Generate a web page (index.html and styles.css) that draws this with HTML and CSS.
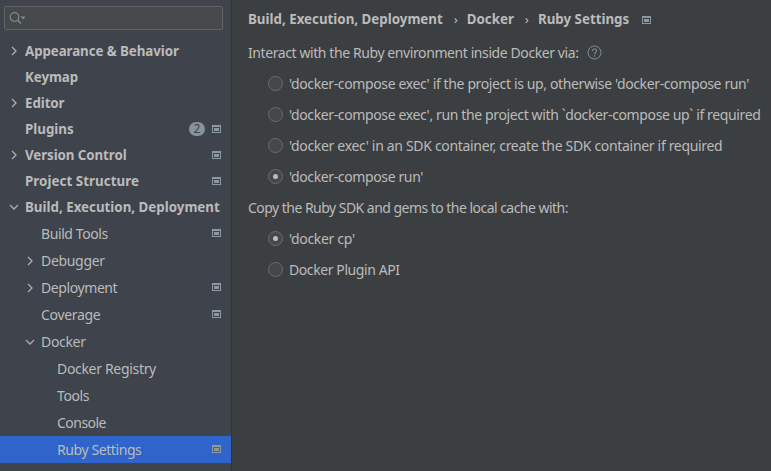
FILE: index.html
```html
<!DOCTYPE html>
<html lang="en"><head><meta charset="utf-8"><title>Settings</title><link rel="stylesheet" href="styles.css"></head>
<body>
<svg class="defs" width="0" height="0">
<symbol id="proj" viewBox="0 0 9 8"><path fill="currentColor" fill-rule="evenodd" d="M0 0h9v8H0zM1 2v5h7V2zM2 3h5v3H2z"/></symbol>
<symbol id="right" viewBox="0 0 10 10"><path d="M3 1l4 4-4 4" fill="none" stroke="currentColor" stroke-width="1.3"/></symbol>
<symbol id="down" viewBox="0 0 10 10"><path d="M1 3l4 4 4-4" fill="none" stroke="currentColor" stroke-width="1.3"/></symbol>
</svg>
<div class="window">
<aside class="sidebar">
<div class="search"><svg width="18" height="14" viewBox="0 0 18 14"><circle cx="5.5" cy="6" r="4.3" fill="none" stroke="#7f8b91" stroke-width="1.2"/><path d="M8.5 9l3.5 3.5" stroke="#7f8b91" stroke-width="1.6"/><path d="M11.5 5.5h5L14 8.5z" fill="#7f8b91"/></svg></div>
<nav class="tree">
<div class="row top"><svg class="arrow"><use href="#right"/></svg><span class="snug">Appearance &amp; Behavior</span></div>
<div class="row top"><i class="arrow"></i><span class="snug">Keymap</span></div>
<div class="row top"><svg class="arrow"><use href="#right"/></svg><span class="snug">Editor</span></div>
<div class="row top"><i class="arrow"></i><span>Plugins</span><b class="badge">2</b><svg class="proj"><use href="#proj"/></svg></div>
<div class="row top"><svg class="arrow"><use href="#right"/></svg><span class="snug">Version Control</span><svg class="proj"><use href="#proj"/></svg></div>
<div class="row top"><i class="arrow"></i><span class="loose">Project Structure</span><svg class="proj"><use href="#proj"/></svg></div>
<div class="row top"><svg class="arrow"><use href="#down"/></svg><span>Build, Execution, Deployment</span></div>
<div class="row sub"><i class="arrow"></i><span class="tight">Build Tools</span><svg class="proj"><use href="#proj"/></svg></div>
<div class="row sub"><svg class="arrow"><use href="#right"/></svg><span>Debugger</span></div>
<div class="row sub"><svg class="arrow"><use href="#right"/></svg><span class="tight">Deployment</span><svg class="proj"><use href="#proj"/></svg></div>
<div class="row sub"><i class="arrow"></i><span>Coverage</span><svg class="proj"><use href="#proj"/></svg></div>
<div class="row sub"><svg class="arrow"><use href="#down"/></svg><span>Docker</span></div>
<div class="row leaf"><span>Docker Registry</span></div>
<div class="row leaf"><span class="tight">Tools</span></div>
<div class="row leaf"><span class="tighter">Console</span></div>
<div class="row leaf selected"><span class="tight">Ruby Settings</span><svg class="proj"><use href="#proj"/></svg></div>
</nav>
</aside>
<main class="content">
<header class="crumbs"><span>Build, Execution, Deployment</span><i>›</i><span>Docker</span><i>›</i><span>Ruby Settings</span><svg class="proj"><use href="#proj"/></svg></header>
<div class="label intro"><span class="tight">Interact with the Ruby environment inside Docker via:</span><svg class="help" viewBox="0 0 15 15"><circle cx="7.5" cy="7.5" r="6.5" fill="none" stroke="currentColor"/><path d="M5.5 6.2a2 2 0 1 1 3 1.5q-1 .5-1 1.6M7.5 10.3v1.4" fill="none" stroke="currentColor" stroke-width="1.2"/></svg></div>
<div class="option wide"><i class="radio"></i><span>'docker-compose exec' if the project is up, otherwise 'docker-compose run'</span></div>
<div class="option wide"><i class="radio"></i><span>'docker-compose exec', run the project with `docker-compose up` if required</span></div>
<div class="option"><i class="radio"></i><span>'docker exec' in an SDK container, create the SDK container if required</span></div>
<div class="option"><i class="radio on"></i><span class="run">'docker-compose run'</span></div>
<div class="label"><span class="tighter">Copy the Ruby SDK and gems to the local cache with:</span></div>
<div class="option"><i class="radio on"></i><span>'docker cp'</span></div>
<div class="option"><i class="radio"></i><span class="tight">Docker Plugin API</span></div>
</main>
</div>
</body></html>
```
FILE: styles.css
```css
*{box-sizing:border-box}
body{margin:0;background:#3c3f41;color:#bbb;font:14px "Noto Sans",sans-serif;letter-spacing:-.32px}
.defs{display:block;height:0}
.window{display:flex;width:771px;height:471px;overflow:hidden}
.sidebar{width:232px;flex:none;background:#3e434c;border-right:1px solid #323537}
.search{height:24px;margin:6px 8px 8px 4px;border:1px solid #646464;border-radius:2px;background:#45494a;display:flex;align-items:center;padding-left:4px}
.row{display:flex;align-items:center;height:27px;padding-right:10px;white-space:nowrap}
.top{height:26px;font-weight:700;font-size:13.333px;letter-spacing:0;padding-left:9px}
.top .snug{letter-spacing:-.08px}
.top .loose{letter-spacing:.06px}
.sub{padding-left:25px}
.leaf{padding-left:57px}
.tight{letter-spacing:-.41px}
.tighter{letter-spacing:-.53px}
.wide,.run{letter-spacing:-.37px}
.selected{background:#2f65ca}
.arrow{width:10px;height:10px;margin-right:6px;color:#adadad;flex:none}
.proj{width:9px;height:8px;margin-left:auto;color:#8b98a1;flex:none}
.sub .proj,.leaf .proj{margin-bottom:1px}
.badge{margin-left:auto;width:16px;height:14px;border-radius:7px;background:#87939a;color:#3e434c;font-size:12px;font-weight:400;line-height:14px;text-align:center}
.badge+.proj{margin-left:7px}
.content{flex:1;padding:4px 0 0 16px;white-space:nowrap}
.crumbs{display:flex;align-items:center;height:30px;font-weight:700;font-size:13.333px;letter-spacing:0}
.crumbs i{font-style:normal;font-weight:400;width:24px;padding-left:2px;text-align:center}
.crumbs .proj{margin-left:13px;margin-top:2px}
.label,.option{display:flex;align-items:center;height:31px}
.intro{margin-top:3px}
.help{width:15px;height:15px;margin-left:8px;color:#7f8b91}
.option{padding-left:20px}
.radio{width:15px;height:15px;border:1px solid #6b6b6b;border-radius:50%;background:#43494a;margin-right:6px;display:grid;place-items:center;flex:none}
.on::after{content:"";width:5px;height:5px;border-radius:50%;background:#bbb}
```
